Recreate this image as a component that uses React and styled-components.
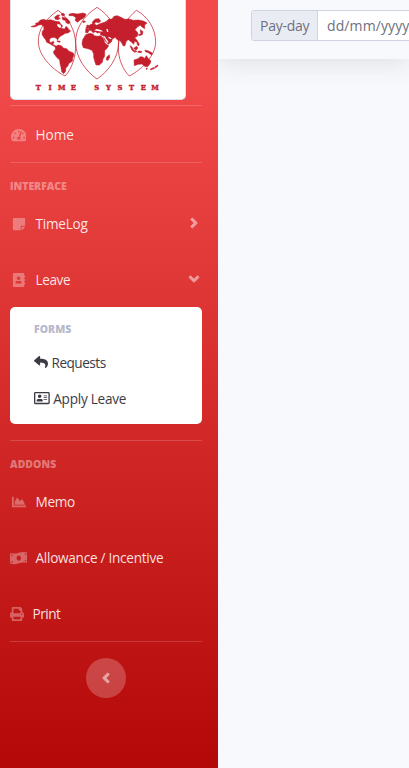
import React from 'react';
import styled, { createGlobalStyle } from 'styled-components';
import {
  FaTachometerAlt, FaStickyNote, FaAddressBook, FaReply, FaRegAddressCard,
  FaChartArea, FaMoneyBillWave, FaPrint, FaAngleRight, FaAngleDown, FaAngleLeft,
} from 'react-icons/fa';

const GlobalStyle = createGlobalStyle`
  * { box-sizing: border-box; }
  body {
    margin: 0;
    overflow: hidden;
    background: #f8f9fc;
    font-family: "Segoe UI", "Open Sans", "Noto Sans", sans-serif;
    font-size: 13.6px;
  }
`;

const Page = styled.div`
  display: flex;
  width: 100%;
  height: 768px;
  overflow: hidden;
`;

const Sidebar = styled.nav`
  display: flex;
  flex-direction: column;
  flex: 0 0 218px;
  height: 768px;
  padding: 0 16px 0 10px;
  background: linear-gradient(180deg, #f24a4a 10%, #b40808 100%);
`;

const Brand = styled.div`
  flex: none;
  width: 176px;
  height: 100px;
  background: #fff;
  border: 1px solid #dddfeb;
  border-top: 0;
  border-radius: 0 0 5px 5px;
  svg { display: block; margin-left: -1px; }
`;

const Divider = styled.hr`
  flex: none;
  width: 100%;
  height: 1px;
  margin: ${(p) => p.$gap || '0'};
  border: 0;
  background: rgba(255, 255, 255, 0.17);
`;

const Heading = styled.div`
  flex: none;
  height: 16px;
  line-height: 15px;
  font-size: 10.4px;
  font-weight: 800;
  letter-spacing: ${(p) => p.$spacing || '0'};
  color: ${(p) => (p.$muted ? '#b7b9cc' : 'rgba(255, 255, 255, 0.4)')};
`;

const NavItem = styled.a`
  display: flex;
  flex: none;
  align-items: center;
  height: 56px;
  color: rgba(255, 255, 255, 0.88);
  letter-spacing: ${(p) => p.$spacing || '0'};
`;

const NavIcon = styled.span`
  display: flex;
  justify-content: center;
  width: ${(p) => (p.$narrow ? '14px' : '17px')};
  margin-right: 8.5px;
  padding-top: 1px;
  color: rgba(255, 255, 255, 0.33);
  svg { flex: none; width: ${(p) => p.$size || '14px'}; height: 14px; }
`;

const Arrow = styled.span`
  display: flex;
  justify-content: center;
  width: 16px;
  margin-left: auto;
  color: #fff;
  opacity: 0.5;
  svg { flex: none; width: 16px; height: 16px; stroke: #fff; stroke-width: 24px; }
`;

const Submenu = styled.div`
  flex: none;
  height: 117px;
  margin-bottom: 16px;
  padding: 15px 24px 0;
  background: #fff;
  border-radius: 5px;
`;

const SubmenuLink = styled.a`
  display: flex;
  align-items: center;
  gap: 3.5px;
  height: 36px;
  color: #3a3b45;
  letter-spacing: ${(p) => p.$spacing || '0'};
  svg { flex: none; width: ${(p) => p.$icon || '14px'}; height: 14px; }
`;

const SubmenuLinks = styled.div`
  padding-top: 6px;
`;

const Toggle = styled.button`
  display: flex;
  flex: none;
  align-items: center;
  justify-content: center;
  align-self: center;
  width: 40px;
  height: 40px;
  margin-top: 16px;
  padding: 0;
  border: 0;
  border-radius: 50%;
  background: rgba(255, 255, 255, 0.22);
  color: #fff;
  svg { width: 16px; height: 16px; opacity: 0.52; stroke: #fff; stroke-width: 24px; }
`;

const Content = styled.main`
  flex: 1;
  min-width: 0;
  overflow: hidden;
`;

const Topbar = styled.header`
  height: 59px;
  padding: 10px 0 0 33px;
  background: #f8f9fc;
  box-shadow: 0 2.4px 28px rgba(58, 59, 69, 0.15);
`;

const InputGroup = styled.div`
  display: flex;
  width: 240px;
  height: 31px;
  border: 1px solid #d1d3e2;
  border-radius: 3px;
  overflow: hidden;
  font-size: 14px;
  line-height: 30px;
  color: #6e707e;
`;

const InputLabel = styled.label`
  flex: 0 0 66px;
  padding-left: 8px;
  background: #eaecf4;
  border-right: 1px solid #d1d3e2;
  letter-spacing: -0.25px;
`;

const DateField = styled.div`
  flex: 1;
  padding-left: 9px;
  background: #fff;
  letter-spacing: 0.1px;
`;

const LAND = [
  // North America
  'M93 80 L108 75 L107 70 L114 68 L120 61 L130 58 L140 61 L152 59 L167 64 L178 65 L182 72 L188 78 L183 85 L194 87 L198 79 L203 83 L207 89 L212 93 L204 99 L196 100 L188 105 L181 109 L176 114 L173 120 L170 116 L163 112 L153 113 L149 118 L148 124 L153 128 L160 124 L162 128 L158 133 L166 137 L171 140 L166 141 L157 136 L147 130 L140 127 L137 119 L131 112 L126 103 L127 94 L132 88 L131 79 L125 74 L116 75 L110 79 L101 81 Z',
  // Arctic islands and Greenland
  'M164 51 L173 45 L180 46 L174 52 L181 55 L174 59 L166 58 Z',
  'M183 42 L190 40 L195 44 L188 49 Z M186 52 L195 53 L203 57 L211 67 L205 72 L197 67 L198 62 L188 59 Z',
  'M207 43 L216 40 L233 42 L249 39 L258 42 L255 50 L248 56 L240 60 L233 67 L225 61 L228 53 L219 47 L207 47 Z',
  'M247 65 L252 62 L257 65 L251 68 Z M171 122 L181 124 L180 127 L172 125 Z',
  // South America
  'M166 140 L175 135 L184 137 L190 144 L200 146 L206 153 L220 159 L222 166 L218 174 L217 184 L207 190 L203 199 L197 204 L197 214 L191 221 L185 215 L183 202 L180 190 L179 180 L170 172 L161 160 L161 153 L166 149 Z',
  // Africa
  'M257 104 L270 100 L280 103 L282 107 L293 109 L302 107 L310 115 L315 130 L326 137 L320 146 L314 152 L314 168 L309 177 L307 187 L298 195 L288 195 L284 183 L281 172 L281 162 L276 151 L264 146 L250 143 L246 132 L248 119 Z',
  'M320 171 L328 164 L329 172 L324 181 L319 180 Z',
  // Europe and Asia
  'M257 98 L257 88 L268 86 L265 79 L272 73 L278 72 L277 66 L286 57 L297 56 L302 64 L296 68 L287 66 L283 72 L290 76 L300 71 L309 68 L318 65 L325 58 L336 57 L342 49 L352 47 L363 52 L374 58 L386 57 L400 61 L415 60 L430 63 L441 69 L434 75 L434 86 L426 81 L421 76 L413 80 L405 89 L414 99 L412 109 L404 113 L411 121 L415 128 L404 124 L401 133 L393 125 L385 119 L379 123 L375 137 L370 138 L362 124 L350 118 L346 112 L337 117 L334 126 L325 133 L314 120 L310 107 L302 105 L301 97 L293 99 L286 95 L279 98 L273 91 L267 91 L264 98 Z',
  'M260 76 L265 75 L268 84 L261 85 Z M257 85 L260 81 L262 87 Z',
  // Japan, Indonesia, Australia, New Zealand
  'M421 89 L429 95 L427 104 L417 107 L415 104 L423 101 L421 94 Z',
  'M390 137 L396 141 L401 151 L411 154 L404 157 L396 151 Z M401 145 L410 139 L414 144 L408 151 Z M416 153 L425 154 L424 158 L413 157 Z M435 150 L446 153 L458 160 L454 165 L445 158 L436 155 Z M412 125 L418 132 L415 138 L411 132 Z',
  'M402 180 L414 176 L421 170 L429 171 L433 176 L439 167 L445 176 L453 183 L450 191 L443 200 L434 199 L426 192 L415 193 L403 197 Z',
  'M438 205 L442 204 L440 209 Z M451 207 L463 202 L464 205 L452 210 Z M466 199 L474 195 L472 200 L466 203 Z',
];

const LETTERS_X = '115 132 150 167 185 202 220 237 290 308 325 343 360 378 395 413 430 448 465';

function Logo() {
  return (
    <svg width="176" height="99" viewBox="30 0 528 297" role="img">
      <g fill="none" stroke="#c51e2c" strokeWidth="2.2">
        <path d="M174 31 C137 57 114 87 115 126 C116 166 154 207 195 228 C216 207 228 169 227 133 C226 88 204 52 174 31 Z" />
        <path d="M291 22 C251 48 226 84 227 128 C228 174 257 213 291 237 C327 213 355 172 356 128 C355 84 327 45 291 22 Z" />
        <path d="M409 31 C382 55 356 87 355 139 C354 178 370 211 388 228 C429 207 466 165 467 127 C467 87 444 49 409 31 Z" />
      </g>
      <g fill="#c51e2c" stroke="#c51e2c" strokeWidth="1.6">
        {LAND.map((d) => <path key={d} d={d} />)}
      </g>
      <g fill="#fff">
        <path d="M172 71 L181 74 L184 82 L179 84 L172 78 Z" />
        <path d="M282 91 L290 87 L303 90 L309 95 L297 94 Z M319 87 L324 88 L325 96 L321 96 Z M310 109 L314 109 L326 127 L322 128 Z M326 110 L335 115 L332 118 L325 113 Z" />
      </g>
      <text
        x={LETTERS_X}
        y="270"
        textAnchor="middle"
        fontFamily="DejaVu Serif, serif"
        fontWeight="700"
        fontSize="20.5"
        fill="#c51e2c"
        stroke="#c51e2c"
        strokeWidth="1.2"
      >
        {'T I M E S Y S T E M'}
      </text>
    </svg>
  );
}

export default function App() {
  return (
    <>
      <GlobalStyle />
      <Page>
        <Sidebar>
          <Brand><Logo /></Brand>
          <Divider $gap="5px 0 0" />
          <NavItem><NavIcon $size="15.75px"><FaTachometerAlt /></NavIcon>Home</NavItem>
          <Divider $gap="0 0 16px" />
          <Heading>INTERFACE</Heading>
          <NavItem $spacing="-0.25px">
            <NavIcon><FaStickyNote /></NavIcon>TimeLog<Arrow><FaAngleRight /></Arrow>
          </NavItem>
          <NavItem $spacing="-0.4px">
            <NavIcon><FaAddressBook /></NavIcon>Leave<Arrow><FaAngleDown /></Arrow>
          </NavItem>
          <Submenu>
            <Heading $muted $spacing="0.1px">FORMS</Heading>
            <SubmenuLinks>
              <SubmenuLink $spacing="-0.5px"><FaReply />Requests</SubmenuLink>
              <SubmenuLink $spacing="-0.25px" $icon="15.75px"><FaRegAddressCard />Apply Leave</SubmenuLink>
            </SubmenuLinks>
          </Submenu>
          <Divider $gap="0 0 16px" />
          <Heading $spacing="0.1px">ADDONS</Heading>
          <NavItem $spacing="-0.3px"><NavIcon><FaChartArea /></NavIcon>Memo</NavItem>
          <NavItem $spacing="-0.27px"><NavIcon $size="17.5px"><FaMoneyBillWave /></NavIcon>Allowance / Incentive</NavItem>
          <NavItem $spacing="-0.5px"><NavIcon $narrow><FaPrint /></NavIcon>Print</NavItem>
          <Divider />
          <Toggle aria-label="Collapse sidebar"><FaAngleLeft /></Toggle>
        </Sidebar>
        <Content>
          <Topbar>
            <InputGroup>
              <InputLabel>Pay-day</InputLabel>
              <DateField>dd/mm/yyyy</DateField>
            </InputGroup>
          </Topbar>
        </Content>
      </Page>
    </>
  );
}
